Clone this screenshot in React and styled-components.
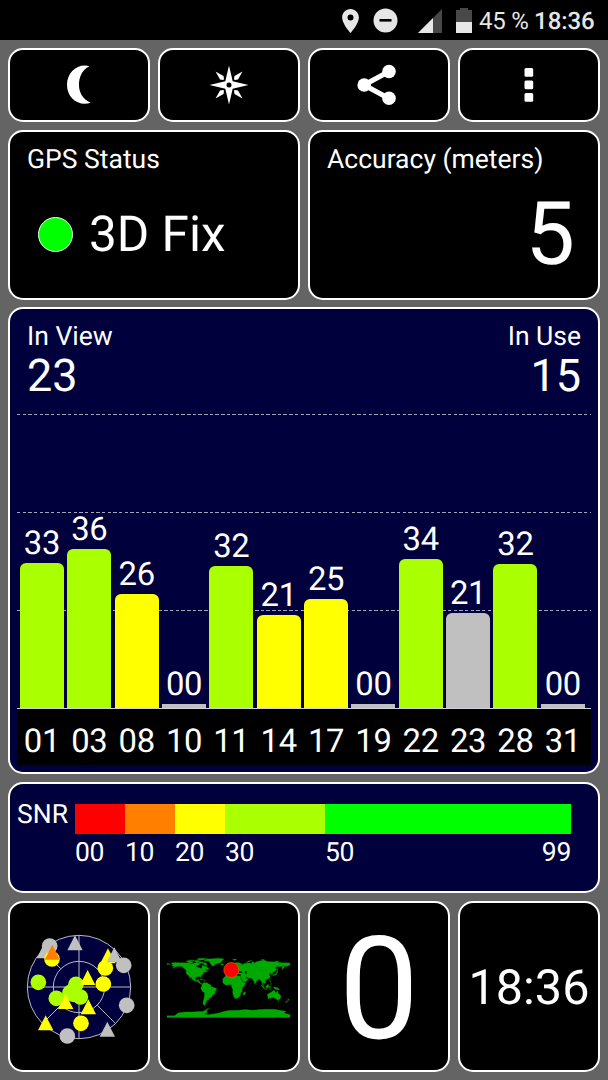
import React from 'react';
import styled, { createGlobalStyle } from 'styled-components';

const GlobalStyle = createGlobalStyle`
  body { margin: 0; background: #646464; }
  * { box-sizing: border-box; }
`;

const NAVY = '#00003c';
const LIME = '#aaff00';
const YELLOW = '#ffff00';
const GREY = '#c0c0c0';

const Screen = styled.div`
  width: 608px;
  height: 1080px;
  display: flex;
  flex-direction: column;
  background: #646464;
  color: #fff;
  font-family: Roboto, sans-serif;
  text-rendering: geometricPrecision;
  overflow: hidden;
`;

const StatusBar = styled.header`
  height: 40px;
  flex: none;
  display: flex;
  align-items: center;
  justify-content: flex-end;
  padding: 1px 13.5px 0 0;
  background: #000;
  color: #e6e6e6;
`;

const StatusIcon = styled.svg`
  display: block;
  flex: none;
  margin-right: ${(p) => p.$gap}px;
`;

const StatusText = styled.span`
  font-size: 24px;
  line-height: 24px;
  font-weight: ${(p) => p.$weight};
  letter-spacing: ${(p) => p.$track || 0}px;
  white-space: pre;
  margin-left: ${(p) => p.$gap || 0}px;
`;

const Dashboard = styled.main`
  display: grid;
  grid-template-columns: repeat(4, 142px);
  grid-template-rows: 74px 170px 467px 111px 171px;
  gap: 7.67px 8px;
  padding: 8px 8px 0;
`;

const Card = styled.section`
  grid-column: span ${(p) => p.$span || 1};
  border: 2px solid #fff;
  border-radius: 15px;
  background: ${(p) => (p.$navy ? NAVY : '#000')};
  overflow: hidden;
`;

const CenterCard = styled(Card)`
  display: flex;
  align-items: center;
  justify-content: center;
  padding-top: ${(p) => p.$drop || 0}px;
`;

const IconButton = styled(CenterCard).attrs({ as: 'button' })`
  padding: 0 ${(p) => p.$nudge || 0}px 0 0;
  color: #fff;
`;

const TitledCard = styled(Card)`
  display: flex;
  flex-direction: column;
  padding: 15px 23px 0 17px;
`;

const Label = styled.div`
  font-size: 26.5px;
  line-height: 26px;
  white-space: nowrap;
`;

const FixRow = styled.div`
  display: flex;
  align-items: center;
  gap: 16px;
  padding: 37px 0 0 11px;
`;

const FixDot = styled.span`
  width: 35px;
  height: 35px;
  margin-bottom: 1px;
  border-radius: 50%;
  border: 1px solid #e8ffe8;
  background: #00ff00;
`;

const Value = styled.div`
  font-size: ${(p) => p.$size}px;
  line-height: 1;
  text-align: ${(p) => p.$align || 'left'};
  white-space: nowrap;
`;

const FixValue = styled(Value)`
  padding-top: 1px;
`;

const AccuracyValue = styled(Value)`
  padding-top: 18px;
`;

const ChartCard = styled(Card)`
  display: flex;
  flex-direction: column;
  padding: 14px 7px 0;
`;

const Counts = styled.div`
  display: flex;
  justify-content: space-between;
  height: 91px;
  padding: 1px 10px 0;
`;

const Count = styled.div`
  display: flex;
  flex-direction: column;
  align-items: ${(p) => (p.$end ? 'flex-end' : 'flex-start')};
`;

const CountValue = styled(Value)`
  margin-top: 3px;
`;

const Plot = styled.div`
  height: 295px;
  display: flex;
  align-items: flex-end;
  gap: 3.35px;
  padding-left: 3px;
  border-bottom: 1px solid #d0d0d8;
  --dash: repeating-linear-gradient(90deg, #a4a4b8 0 3.4px, transparent 3.4px 5.67px);
  background:
    var(--dash) 0 0 / 100% 1px no-repeat,
    var(--dash) 0 98px / 100% 1px no-repeat,
    var(--dash) 0 196px / 100% 1px no-repeat;
`;

const BarColumn = styled.div`
  width: 44px;
  flex: none;
  display: flex;
  flex-direction: column;
  align-items: center;
  gap: 3px;
  font-size: 32.8px;
  letter-spacing: -0.3px;
  line-height: 32px;
`;

const Bar = styled.div`
  width: 100%;
  border-radius: ${(p) => (p.$flat ? 0 : '6px 6px 0 0')};
  background: ${(p) => p.$color};
`;

const Axis = styled.div`
  height: 56px;
  display: flex;
  gap: 3.35px;
  padding: 17px 0 0 3px;
  background: #000;
`;

const AxisLabel = styled.div`
  width: 44px;
  flex: none;
  text-align: center;
  font-size: 32.8px;
  letter-spacing: -0.3px;
  line-height: 32px;
`;

const LegendCard = styled(Card)`
  display: flex;
  align-items: flex-start;
  padding: 18px 27px 0 7px;
`;

const LegendScale = styled.div`
  display: grid;
  grid-template-columns: 50px 50px 50px 100px 246px;
  margin: 2px 0 0 auto;
`;

const Swatch = styled.div`
  height: 30px;
  background: ${(p) => p.$color};
`;

const LegendTick = styled(Label)`
  display: flex;
  justify-content: space-between;
  padding-top: 6px;
  letter-spacing: -0.3px;
`;

const MoonIcon = () => (
  <svg width="26" height="40" viewBox="0 0 26 40">
    <path fill="#fff" d="M23.500 1.300C15.500 5 13 13 13 20s3.500 14.500 11.700 17.700C13 42 1 33 1 20S12-2 23.500 1.300Z" />
  </svg>
);

const CompassIcon = () => (
  <svg width="40" height="40" viewBox="-20 -20 40 40">
    <g fill="#fff">
      <path d="M0-19.500 3.700-3.700 19.500 0 3.700 3.700 0 19.500-3.700 3.700-19.500 0-3.700-3.700Z" />
      {[0, 90, 180, 270].map((a) => (
        <path key={a} transform={`rotate(${a})`} d="M13.500-13.500 9-5.500Q6-4.800 5.200-5.200 4.800-6 5.500-9Z" />
      ))}
    </g>
    <circle r="2.500" fill="#000" />
  </svg>
);

const ShareIcon = () => (
  <svg width="40" height="42" viewBox="0 0 40 42">
    <path d="M32 7.500 7 21 32 34.500" fill="none" stroke="#fff" strokeWidth="5" />
    <g fill="#fff">
      <circle cx="32" cy="7.500" r="6.800" />
      <circle cx="7.200" cy="21" r="6.800" />
      <circle cx="32" cy="34.300" r="6.800" />
    </g>
  </svg>
);

const MoreIcon = () => (
  <svg width="10" height="36" viewBox="0 0 10 36">
    <g fill="#fff">
      <rect x="0.500" y="1" width="8.700" height="8.700" rx="1.500" />
      <rect x="0.500" y="13.600" width="8.700" height="8.700" rx="1.500" />
      <rect x="0.500" y="26" width="8.700" height="8.700" rx="1.500" />
    </g>
  </svg>
);

const triangle = (x, y, color) => ({ shape: 'triangle', x, y, color });
const circle = (x, y, color) => ({ shape: 'circle', x, y, color });

const skyMarks = [
  triangle(88, 77, GREY), circle(104, 62, GREY), circle(111, 101, YELLOW), triangle(112, 81, '#ff8000'),
  triangle(180, 53, GREY), circle(326, 120, GREY), triangle(279, 92, YELLOW), circle(271, 128, YELLOW),
  triangle(298, 89, GREY), circle(70, 171, LIME), circle(265, 176, YELLOW), circle(183, 177, LIME),
  circle(124, 219, LIME), circle(165, 202, LIME), circle(176, 207, LIME), circle(196, 215, LIME),
  triangle(218, 157, YELLOW), triangle(152, 229, YELLOW), triangle(220, 245, YELLOW),
  circle(335, 240, GREY), circle(198, 294, YELLOW), triangle(92, 293, YELLOW),
  circle(157, 332, GREY), triangle(277, 312, GREY),
];

const SkyView = () => (
  <svg width="114" height="114" viewBox="21 14 342 342">
    <circle cx="192" cy="185" r="155" fill={NAVY} />
    <g fill="none" stroke="#b8b8c4" strokeWidth="3">
      <circle cx="192" cy="185" r="155" />
      <circle cx="192" cy="185" r="77" />
      <path d="M37 185H347M192 30V340M137 130 82 75M247 130 302 75M137 240 82 295M247 240 302 295" />
    </g>
    {skyMarks.map((m, i) =>
      m.shape === 'circle' ? (
        <circle key={i} cx={m.x} cy={m.y} r="23.500" fill={m.color} />
      ) : (
        <path key={i} d={`M${m.x} ${m.y - 23}l23 45h-46z`} fill={m.color} />
      )
    )}
  </svg>
);

// Coastlines as longitude, negated latitude.
const land = [
  // North and Central America
  '-168,-66 -164,-70 -156,-71 -141,-70 -128,-70 -115,-69 -108,-68 -96,-69 -94,-72 -86,-69 -81,-67 -87,-64 -94,-61 -94,-58 -88,-56 -82,-55 -80,-51 -79,-55 -77,-58 -78,-62 -73,-62 -69,-59 -65,-60 -61,-55 -56,-52 -60,-50 -66,-50 -70,-47 -64,-49 -65,-46 -60,-46 -66,-43 -70,-43 -74,-40 -76,-35 -81,-31 -80,-26 -82,-28 -84,-30 -90,-29 -97,-28 -97,-22 -95,-18 -91,-19 -90,-21 -87,-21 -88,-16 -83,-15 -83,-10 -79,-9 -77,-8 -80,-7 -86,-11 -88,-13 -94,-16 -100,-17 -105,-20 -106,-23 -112,-29 -114,-31 -110,-23 -113,-26 -117,-33 -121,-35 -124,-40 -124,-48 -130,-54 -137,-59 -146,-60 -152,-59 -158,-56 -165,-54 -158,-58 -166,-61 -161,-64',
  '-180,-68 -170,-66 -176,-65 -180,-65',
  // Arctic archipelago
  '-120,-72 -124,-75 -116,-76 -106,-74 -104,-70 -112,-69',
  '-100,-73 -98,-76 -93,-77 -87,-76 -82,-74 -90,-72',
  '-90,-73 -78,-73 -68,-69 -62,-66 -66,-62 -73,-65 -73,-68 -84,-70',
  '-90,-80 -92,-82 -77,-83 -63,-82 -76,-78 -88,-77',
  '-118,-77 -112,-78 -98,-78 -103,-76',
  // Greenland, Iceland, Svalbard
  '-72,-78 -62,-81 -45,-82 -28,-83 -13,-81 -19,-76 -22,-71 -32,-68 -40,-65 -43,-60 -50,-63 -54,-69 -58,-75 -69,-76',
  '-24,-65 -18,-67 -14,-65 -19,-63',
  '12,-80 24,-81 20,-77 15,-77',
  // Caribbean
  '-85,-22 -80,-23 -74,-20 -78,-20',
  '-74,-20 -68,-19 -72,-18',
  // South America
  '-77,-8 -72,-12 -62,-11 -52,-5 -50,0 -44,2 -35,5 -35,9 -39,14 -40,21 -48,26 -49,30 -54,34 -58,34 -57,38 -62,39 -65,43 -66,47 -69,51 -66,55 -72,54 -75,49 -73,39 -71,30 -70,18 -76,14 -81,6 -80,2 -78,-2',
  // Africa
  '-6,-36 10,-37 11,-33 20,-31 24,-33 34,-31 37,-21 43,-12 51,-12 47,-4 40,3 40,14 35,20 35,25 31,30 26,34 19,35 14,25 12,16 13,9 9,1 9,-4 5,-6 -4,-5 -9,-5 -16,-11 -17,-17 -16,-24 -10,-30',
  '50,15 49,22 46,25 43,23 44,17',
  // Eurasia
  '-9,-43 -2,-43 -1,-46 -4,-48 2,-51 8,-54 9,-57 12,-54 20,-55 24,-58 28,-60 22,-60 25,-65 22,-66 17,-61 16,-57 13,-56 10,-59 6,-58 5,-62 13,-66 20,-70 28,-71 40,-67 34,-66 42,-65 45,-68 60,-69 68,-68 69,-73 74,-72 74,-68 80,-72 90,-75 104,-78 113,-74 127,-73 140,-73 150,-71 160,-70 171,-70 180,-69 180,-65 178,-62 170,-60 163,-59 162,-55 157,-51 156,-57 163,-62 155,-59 142,-59 136,-54 141,-52 138,-46 132,-43 128,-39 129,-35 126,-35 125,-39 121,-40 118,-38 122,-37 119,-34 122,-30 118,-24 110,-21 106,-19 109,-12 105,-9 101,-13 100,-9 104,-2 101,-3 98,-9 98,-16 94,-17 91,-22 86,-20 80,-15 80,-11 77,-8 73,-18 71,-21 67,-25 57,-26 50,-30 52,-24 59,-23 52,-16 44,-13 39,-21 35,-28 36,-36 27,-37 27,-40 40,-41 40,-44 34,-45 30,-46 28,-42 23,-36 19,-42 13,-46 18,-40 16,-38 9,-44 3,-43 -1,-38 -6,-36 -9,-37',
  // Britain, Novaya Zemlya, Japan and Sakhalin
  '-5,-50 1,-51 0,-53 -3,-59 -6,-57 -3,-54', '-10,-52 -6,-52 -6,-55 -10,-54',
  '52,-71 58,-75 68,-77 56,-71', '96,-80 105,-79 98,-78', '137,-75 149,-75 142,-73',
  '130,-32 136,-34 140,-35 142,-40 145,-44 141,-45 140,-40 135,-36 130,-34',
  '142,-46 144,-50 142,-54',
  // South-east Asia
  '95,-5 104,1 106,6 102,4', '105,7 114,8 113,6 106,6', '109,-1 117,-7 118,-1 116,4 110,3',
  '120,-1 125,-1 121,1 123,5 120,5', '120,-18 122,-18 124,-13 121,-14', '122,-8 126,-9 125,-6',
  '131,1 138,2 145,4 150,10 143,8 138,8 133,4', '80,-9 82,-7 80,-6', '118,9 126,9 122,10', '109,-20 111,-19 109,-18', '120,-25 122,-24 121,-22',
  // Australia and New Zealand
  '114,22 122,18 128,14 131,11 136,12 136,16 140,17 142,11 146,19 153,26 153,31 150,37 144,39 138,35 131,32 124,33 116,35 115,31',
  '145,41 148,41 147,44', '173,35 178,38 175,41 174,38', '172,41 174,42 168,47 167,45',
  // Antarctica
  '-180,90 -180,85 -158,85 -150,79 -146,76 -125,74 -105,74 -90,73 -75,73 -68,69 -61,64 -57,63 -64,69 -62,75 -70,80 -60,82 -40,79 -28,77 -12,72 0,70 30,69 50,67 70,69 80,68 90,67 110,66 135,66 150,69 168,72 163,77 180,82 180,90',
];

const WorldMap = () => (
  <svg width="126" height="62" viewBox="33 35 378 186">
    <g transform="translate(220.500 124) scale(1.025)" fill="#00a800" stroke="#00a800" strokeWidth="0.800">
      {land.map((points, i) => (
        <polygon key={i} points={points} />
      ))}
      <polygon fill="#000" stroke="none" points="48,-46 53,-46 53,-37 49,-38" />
    </g>
    <circle cx="229" cy="74" r="22.500" fill="#ff0000" stroke="#c87800" strokeWidth="2" />
  </svg>
);

const satellites = [
  { id: '01', snr: '33', height: 145, color: LIME },
  { id: '03', snr: '36', height: 159, color: LIME },
  { id: '08', snr: '26', height: 114, color: YELLOW },
  { id: '10', snr: '00', height: 4, color: GREY },
  { id: '11', snr: '32', height: 142, color: LIME },
  { id: '14', snr: '21', height: 93, color: YELLOW },
  { id: '17', snr: '25', height: 109, color: YELLOW },
  { id: '19', snr: '00', height: 4, color: GREY },
  { id: '22', snr: '34', height: 149, color: LIME },
  { id: '23', snr: '21', height: 95, color: GREY },
  { id: '28', snr: '32', height: 144, color: LIME },
  { id: '31', snr: '00', height: 4, color: GREY },
];

const legendColors = ['#ff0000', '#ff8000', YELLOW, LIME, '#00ff00'];

export default function App() {
  return (
    <Screen>
      <GlobalStyle />
      <StatusBar>
        <StatusIcon $gap={14} width="17" height="24" viewBox="5 2 14 20">
          <path fill="#e6e6e6" d="M12 2C8.130 2 5 5.130 5 9c0 5.250 7 13 7 13s7-7.750 7-13c0-3.870-3.130-7-7-7zm0 9.500a2.500 2.500 0 1 1 0-5 2.500 2.500 0 0 1 0 5z" />
        </StatusIcon>
        <StatusIcon $gap={19.500} width="25" height="25" viewBox="0 0 25 25">
          <circle cx="12.500" cy="12.500" r="12" fill="#e6e6e6" />
          <rect x="6.500" y="11" width="12" height="2.600" fill="#000" />
        </StatusIcon>
        <StatusIcon $gap={14} width="24" height="24" viewBox="0 0 24 24">
          <path fill="#484848" d="M24 0v24H0z" />
          <path fill="#e6e6e6" d="M15 9v15H0z" />
        </StatusIcon>
        <StatusIcon $gap={7} width="16" height="25" viewBox="0 0 16 25">
          <path fill="#484848" d="M4 0h8v2h4v12H0V2h4z" />
          <path fill="#e6e6e6" d="M0 14h16v11H0z" />
        </StatusIcon>
        <StatusText $weight={400} $track={-0.2}>45 %</StatusText>
        <StatusText $weight={500} $track={-0.1} $gap={5.5}>18:36</StatusText>
      </StatusBar>

      <Dashboard>
        <IconButton aria-label="Night mode" $nudge={1}><MoonIcon /></IconButton>
        <IconButton aria-label="Compass" $nudge={1}><CompassIcon /></IconButton>
        <IconButton aria-label="Share" $nudge={5}><ShareIcon /></IconButton>
        <IconButton aria-label="More" $nudge={1}><MoreIcon /></IconButton>

        <TitledCard $span={2}>
          <Label>GPS Status</Label>
          <FixRow>
            <FixDot />
            <FixValue $size={49.5}>3D Fix</FixValue>
          </FixRow>
        </TitledCard>
        <TitledCard $span={2}>
          <Label>Accuracy (meters)</Label>
          <AccuracyValue $size={88} $align="right">5</AccuracyValue>
        </TitledCard>

        <ChartCard $span={4} $navy>
          <Counts>
            <Count>
              <Label>In View</Label>
              <CountValue $size={45}>23</CountValue>
            </Count>
            <Count $end>
              <Label>In Use</Label>
              <CountValue $size={45}>15</CountValue>
            </Count>
          </Counts>
          <Plot>
            {satellites.map((s) => (
              <BarColumn key={s.id}>
                {s.snr}
                <Bar $color={s.color} $flat={s.snr === '00'} style={{ height: s.height }} />
              </BarColumn>
            ))}
          </Plot>
          <Axis>
            {satellites.map((s) => (
              <AxisLabel key={s.id}>{s.id}</AxisLabel>
            ))}
          </Axis>
        </ChartCard>

        <LegendCard $span={4} $navy>
          <Label>SNR</Label>
          <LegendScale>
            {legendColors.map((c) => (
              <Swatch key={c} $color={c} />
            ))}
            <LegendTick>00</LegendTick>
            <LegendTick>10</LegendTick>
            <LegendTick>20</LegendTick>
            <LegendTick>30</LegendTick>
            <LegendTick>
              <span>50</span>
              <span>99</span>
            </LegendTick>
          </LegendScale>
        </LegendCard>

        <CenterCard $drop={2}><SkyView /></CenterCard>
        <CenterCard $drop={4}><WorldMap /></CenterCard>
        <CenterCard $drop={7}><Value $size={143}>0</Value></CenterCard>
        <CenterCard $drop={4}><Value $size={48.5}>18:36</Value></CenterCard>
      </Dashboard>
    </Screen>
  );
}
